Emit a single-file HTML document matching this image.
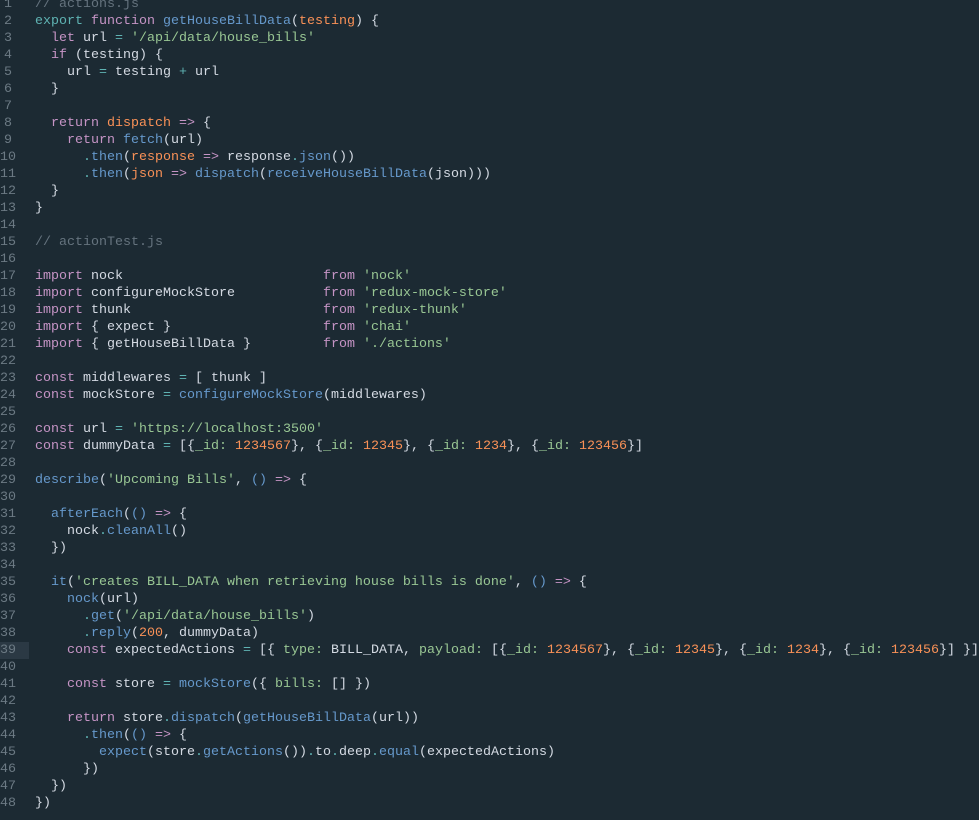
<!DOCTYPE html>
<html><head><meta charset="utf-8"><style>
body{margin:0;background:#1c2a33;width:979px;height:820px;overflow:hidden}
.w{position:absolute;top:-4.5px;left:0;font-family:"Liberation Mono",monospace;font-size:13.33px;line-height:17px;color:#d4dae3}
.l{position:relative;height:17px;white-space:pre}
.n{position:absolute;left:0;width:12px;text-align:right;color:#6c7a84}
.x{position:absolute;left:35px}
.hl{background:#2b3944;width:29px;position:absolute;left:0;top:0;height:17px}
.k{color:#c594c5}.b{color:#6699cc}.s{color:#99c794}.o{color:#f99157}.t{color:#5fb3b3}.c{color:#65737e}
</style></head><body><div class="w">
<div class="l"><span class="n">1</span><span class="x"><span class="c">// actions.js</span></span></div>
<div class="l"><span class="n">2</span><span class="x"><span class="t">export</span> <span class="k">function</span> <span class="b">getHouseBillData</span>(<span class="o">testing</span>) {</span></div>
<div class="l"><span class="n">3</span><span class="x">  <span class="k">let</span> url <span class="t">=</span> <span class="s">'/api/data/house_bills'</span></span></div>
<div class="l"><span class="n">4</span><span class="x">  <span class="k">if</span> (testing) {</span></div>
<div class="l"><span class="n">5</span><span class="x">    url <span class="t">=</span> testing <span class="t">+</span> url</span></div>
<div class="l"><span class="n">6</span><span class="x">  }</span></div>
<div class="l"><span class="n">7</span></div>
<div class="l"><span class="n">8</span><span class="x">  <span class="k">return</span> <span class="o">dispatch</span> <span class="k">=&gt;</span> {</span></div>
<div class="l"><span class="n">9</span><span class="x">    <span class="k">return</span> <span class="b">fetch</span>(url)</span></div>
<div class="l"><span class="n">10</span><span class="x">      <span class="t">.</span><span class="b">then</span>(<span class="o">response</span> <span class="k">=&gt;</span> response<span class="t">.</span><span class="b">json</span>())</span></div>
<div class="l"><span class="n">11</span><span class="x">      <span class="t">.</span><span class="b">then</span>(<span class="o">json</span> <span class="k">=&gt;</span> <span class="b">dispatch</span>(<span class="b">receiveHouseBillData</span>(json)))</span></div>
<div class="l"><span class="n">12</span><span class="x">  }</span></div>
<div class="l"><span class="n">13</span><span class="x">}</span></div>
<div class="l"><span class="n">14</span></div>
<div class="l"><span class="n">15</span><span class="x"><span class="c">// actionTest.js</span></span></div>
<div class="l"><span class="n">16</span></div>
<div class="l"><span class="n">17</span><span class="x"><span class="k">import</span> nock                         <span class="k">from</span> <span class="s">'nock'</span></span></div>
<div class="l"><span class="n">18</span><span class="x"><span class="k">import</span> configureMockStore           <span class="k">from</span> <span class="s">'redux-mock-store'</span></span></div>
<div class="l"><span class="n">19</span><span class="x"><span class="k">import</span> thunk                        <span class="k">from</span> <span class="s">'redux-thunk'</span></span></div>
<div class="l"><span class="n">20</span><span class="x"><span class="k">import</span> { expect }                   <span class="k">from</span> <span class="s">'chai'</span></span></div>
<div class="l"><span class="n">21</span><span class="x"><span class="k">import</span> { getHouseBillData }         <span class="k">from</span> <span class="s">'./actions'</span></span></div>
<div class="l"><span class="n">22</span></div>
<div class="l"><span class="n">23</span><span class="x"><span class="k">const</span> middlewares <span class="t">=</span> [ thunk ]</span></div>
<div class="l"><span class="n">24</span><span class="x"><span class="k">const</span> mockStore <span class="t">=</span> <span class="b">configureMockStore</span>(middlewares)</span></div>
<div class="l"><span class="n">25</span></div>
<div class="l"><span class="n">26</span><span class="x"><span class="k">const</span> url <span class="t">=</span> <span class="s">'https://localhost:3500'</span></span></div>
<div class="l"><span class="n">27</span><span class="x"><span class="k">const</span> dummyData <span class="t">=</span> [{<span class="s">_id:</span> <span class="o">1234567</span>}, {<span class="s">_id:</span> <span class="o">12345</span>}, {<span class="s">_id:</span> <span class="o">1234</span>}, {<span class="s">_id:</span> <span class="o">123456</span>}]</span></div>
<div class="l"><span class="n">28</span></div>
<div class="l"><span class="n">29</span><span class="x"><span class="b">describe</span>(<span class="s">'Upcoming Bills'</span>, <span class="b">()</span> <span class="k">=&gt;</span> {</span></div>
<div class="l"><span class="n">30</span></div>
<div class="l"><span class="n">31</span><span class="x">  <span class="b">afterEach</span>(<span class="b">()</span> <span class="k">=&gt;</span> {</span></div>
<div class="l"><span class="n">32</span><span class="x">    nock<span class="t">.</span><span class="b">cleanAll</span>()</span></div>
<div class="l"><span class="n">33</span><span class="x">  })</span></div>
<div class="l"><span class="n">34</span></div>
<div class="l"><span class="n">35</span><span class="x">  <span class="b">it</span>(<span class="s">'creates BILL_DATA when retrieving house bills is done'</span>, <span class="b">()</span> <span class="k">=&gt;</span> {</span></div>
<div class="l"><span class="n">36</span><span class="x">    <span class="b">nock</span>(url)</span></div>
<div class="l"><span class="n">37</span><span class="x">      <span class="t">.</span><span class="b">get</span>(<span class="s">'/api/data/house_bills'</span>)</span></div>
<div class="l"><span class="n">38</span><span class="x">      <span class="t">.</span><span class="b">reply</span>(<span class="o">200</span>, dummyData)</span></div>
<div class="l"><span class="hl"></span><span class="n">39</span><span class="x">    <span class="k">const</span> expectedActions <span class="t">=</span> [{ <span class="s">type:</span> BILL_DATA, <span class="s">payload:</span> [{<span class="s">_id:</span> <span class="o">1234567</span>}, {<span class="s">_id:</span> <span class="o">12345</span>}, {<span class="s">_id:</span> <span class="o">1234</span>}, {<span class="s">_id:</span> <span class="o">123456</span>}] }]</span></div>
<div class="l"><span class="n">40</span></div>
<div class="l"><span class="n">41</span><span class="x">    <span class="k">const</span> store <span class="t">=</span> <span class="b">mockStore</span>({ <span class="s">bills:</span> [] })</span></div>
<div class="l"><span class="n">42</span></div>
<div class="l"><span class="n">43</span><span class="x">    <span class="k">return</span> store<span class="t">.</span><span class="b">dispatch</span>(<span class="b">getHouseBillData</span>(url))</span></div>
<div class="l"><span class="n">44</span><span class="x">      <span class="t">.</span><span class="b">then</span>(<span class="b">()</span> <span class="k">=&gt;</span> {</span></div>
<div class="l"><span class="n">45</span><span class="x">        <span class="b">expect</span>(store<span class="t">.</span><span class="b">getActions</span>())<span class="t">.</span>to<span class="t">.</span>deep<span class="t">.</span><span class="b">equal</span>(expectedActions)</span></div>
<div class="l"><span class="n">46</span><span class="x">      })</span></div>
<div class="l"><span class="n">47</span><span class="x">  })</span></div>
<div class="l"><span class="n">48</span><span class="x">})</span></div>
</div></body></html>
